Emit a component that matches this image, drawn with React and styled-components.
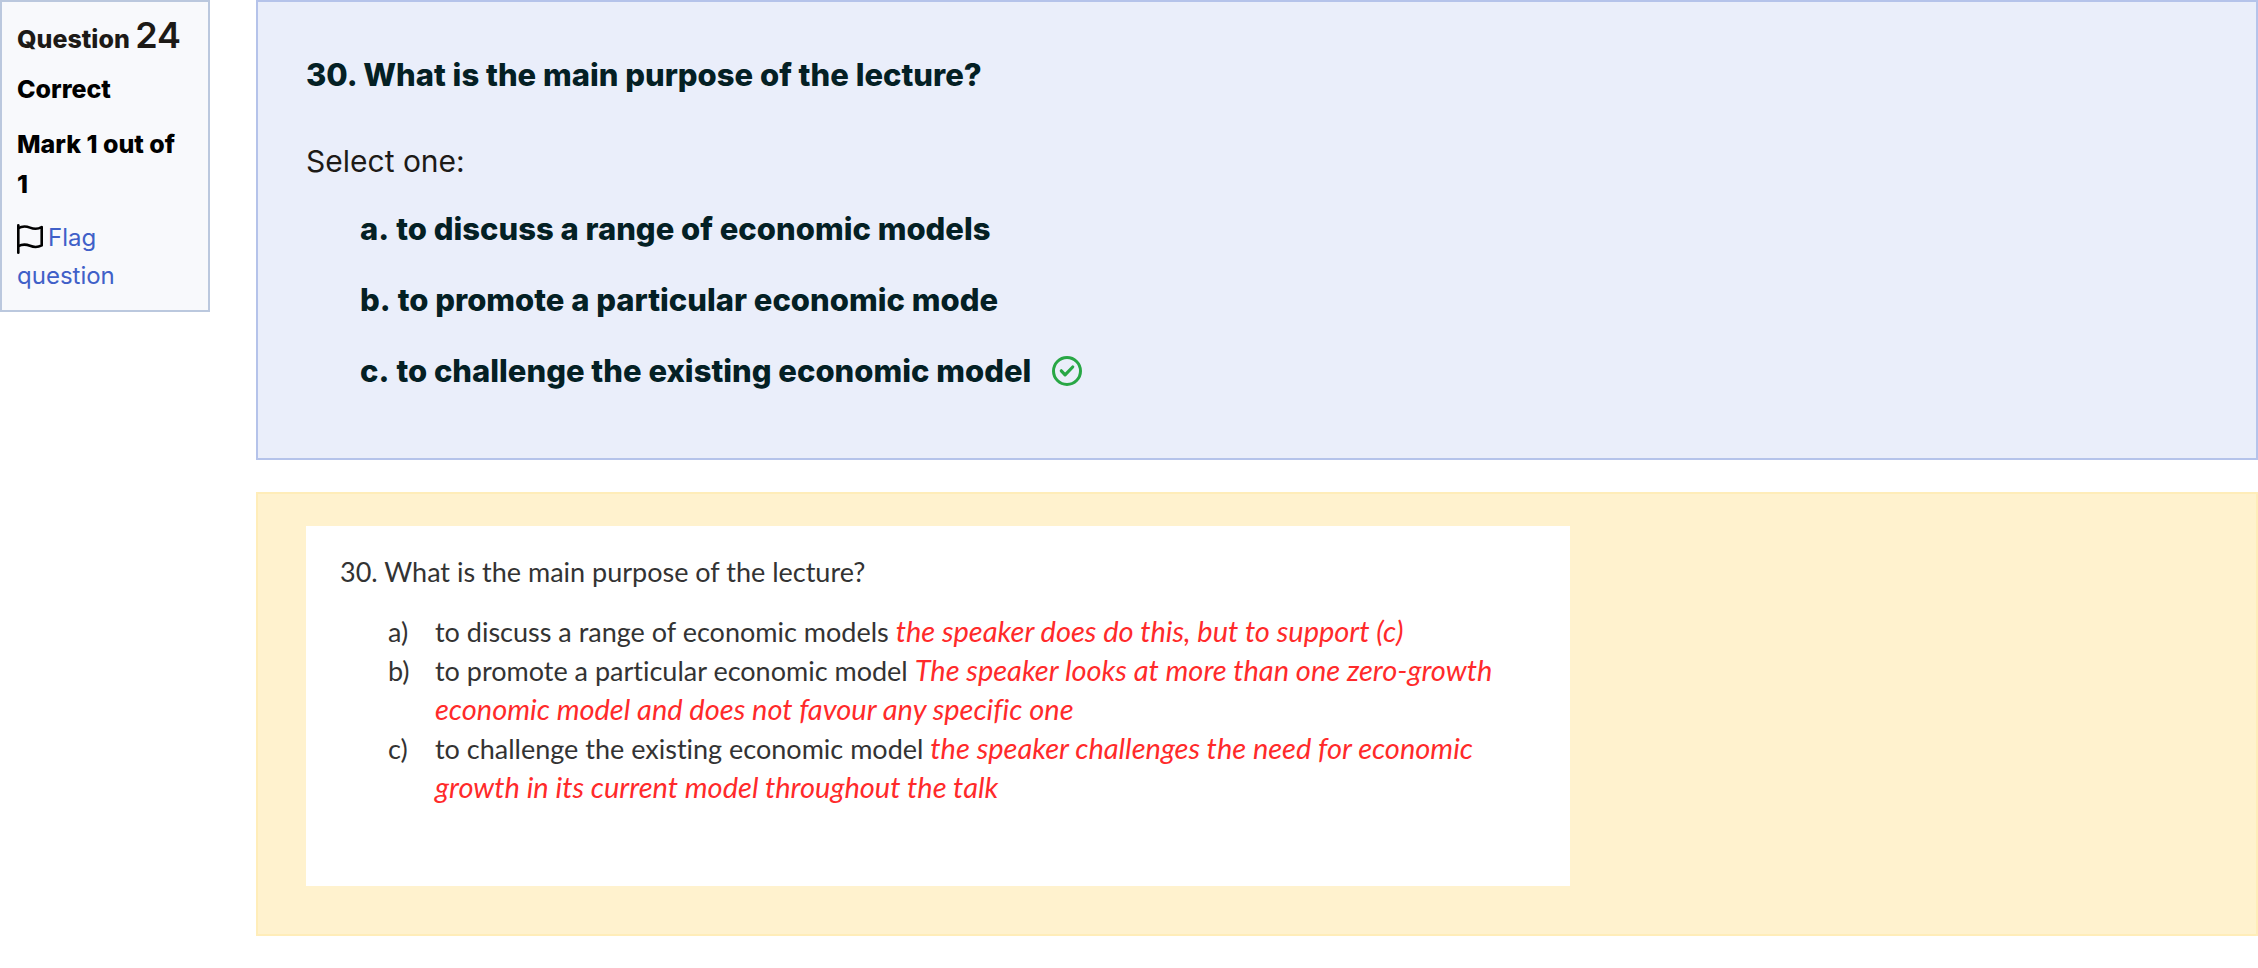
import React from "react";
import styled, { createGlobalStyle } from "styled-components";

const GlobalStyle = createGlobalStyle`
  *, *::before, *::after { box-sizing: border-box; }
  body {
    margin: 0;
    background: #fff;
    color: #1d1a17;
    font-family: Inter, "Liberation Sans", sans-serif;
  }
  h2, h3, p, ol { margin: 0; padding: 0; font-weight: inherit; }
`;

const Question = styled.main`
  display: flex;
  align-items: flex-start;
  gap: 46px;
`;

const Info = styled.aside`
  flex: none;
  width: 210px;
  padding: 9px 24px 15px 15px;
  border: 2px solid #bbc8de;
  background: #f8f9fc;
  font-size: 24px;
  line-height: 38px;
`;

const QuestionNo = styled.h3`
  padding-bottom: 6px;
  font-size: 25px;
  font-weight: 800;
  line-height: 48px;
  white-space: nowrap;
`;

const Number = styled.span`
  font-size: 36px;
  font-weight: 600;
`;

const InfoLine = styled.p`
  padding-bottom: 15px;
  color: #000;
  font-size: 25px;
  font-weight: 800;
  line-height: 40px;
`;

const FlagLink = styled.a`
  color: #4060c8;
  text-decoration: none;
`;

const FlagIcon = styled.svg`
  width: 26px;
  height: 30px;
  margin-right: 5px;
  vertical-align: -8px;
`;

const Content = styled.div`
  flex: 1;
  min-width: 0;
  display: flex;
  flex-direction: column;
  gap: 32px;
`;

const Formulation = styled.section`
  padding: 50px 48px 64px;
  border: 2px solid #b5c3ea;
  background: #eaeefa;
  font-size: 31px;
  line-height: 46px;
`;

const QuestionText = styled.h2`
  color: #042024;
  font-size: 31px;
  font-weight: 800;
`;

const Prompt = styled.p`
  padding-top: 40px;
  font-size: 30px;
`;

const Answers = styled.ol`
  display: flex;
  flex-direction: column;
  gap: 25px;
  padding: 22px 0 0 54px;
  color: #042024;
  font-weight: 800;
  list-style: none;
`;

const Answer = styled.li`
  display: flex;
  align-items: center;
  gap: 7px;
`;

const CorrectIcon = styled.svg`
  width: 30px;
  height: 30px;
  margin-left: 14px;
`;

const Feedback = styled.section`
  padding: 32px 48px 48px;
  border: 2px solid #ffedb9;
  background: #fff2ce;
`;

const Sheet = styled.article`
  max-width: 1264px;
  min-height: 360px;
  padding: 26px 56px 28px 34px;
  background: #fff;
  color: #333;
  font-family: Lato, "Open Sans", sans-serif;
  font-size: 27px;
  font-variant-ligatures: none;
  line-height: 39px;
`;

const Notes = styled.ol`
  padding: 21px 0 0 48px;
  list-style: none;
`;

const Note = styled.li`
  display: grid;
  grid-template-columns: 47px 1fr;
`;

const Comment = styled.em`
  color: #ff2a2a;
  font-size: 29px;
  line-height: 1;
`;

const answers = [
  { id: "a", text: "to discuss a range of economic models" },
  { id: "b", text: "to promote a particular economic mode" },
  { id: "c", text: "to challenge the existing economic model", correct: true },
];

const notes = [
  {
    id: "a",
    text: "to discuss a range of economic models",
    lines: ["the speaker does do this, but to support (c)"],
  },
  {
    id: "b",
    text: "to promote a particular economic model",
    lines: ["The speaker looks at more than one zero-growth", "economic model and does not favour any specific one"],
  },
  {
    id: "c",
    text: "to challenge the existing economic model",
    lines: ["the speaker challenges the need for economic", "growth in its current model throughout the talk"],
  },
];

export default function App() {
  return (
    <>
      <GlobalStyle />
      <Question>
        <Info>
          <QuestionNo>
            Question <Number>24</Number>
          </QuestionNo>
          <InfoLine>Correct</InfoLine>
          <InfoLine>Mark 1 out of 1</InfoLine>
          <FlagLink href="#flag">
            <FlagIcon viewBox="0 0 26 30" fill="none" stroke="#000" strokeWidth="2.6" strokeLinecap="round" aria-hidden="true">
              <path d="M1.3 1.3v27.4" />
              <path d="M1.3 4.2C5 2 9 2 13 3.6s8 1.6 11.7-.6v18.4c-3.7 2-7.7 2-11.7.4s-8-1.6-11.7.4" strokeLinejoin="round" />
            </FlagIcon>
            Flag question
          </FlagLink>
        </Info>
        <Content>
          <Formulation>
            <QuestionText>30. What is the main purpose of the lecture?</QuestionText>
            <Prompt>Select one:</Prompt>
            <Answers>
              {answers.map((a) => (
                <Answer key={a.id}>
                  <span>{a.id}.</span>
                  <span>{a.text}</span>
                  {a.correct && (
                    <CorrectIcon viewBox="0 0 30 30" fill="none" stroke="#28a745" role="img" aria-label="Correct">
                      <circle cx="15" cy="15" r="13.5" strokeWidth="3" />
                      <path d="M9.3 14.8l3.8 4 7.6-7.8" strokeWidth="3.2" strokeLinecap="round" strokeLinejoin="round" />
                    </CorrectIcon>
                  )}
                </Answer>
              ))}
            </Answers>
          </Formulation>
          <Feedback>
            <Sheet>
              <p>30. What is the main purpose of the lecture?</p>
              <Notes>
                {notes.map((n) => (
                  <Note key={n.id}>
                    <span>{n.id})</span>
                    <span>
                      {n.text}{" "}
                      <Comment>
                        {n.lines[0]}
                        {n.lines[1] && (
                          <>
                            <br />
                            {n.lines[1]}
                          </>
                        )}
                      </Comment>
                    </span>
                  </Note>
                ))}
              </Notes>
            </Sheet>
          </Feedback>
        </Content>
      </Question>
    </>
  );
}
